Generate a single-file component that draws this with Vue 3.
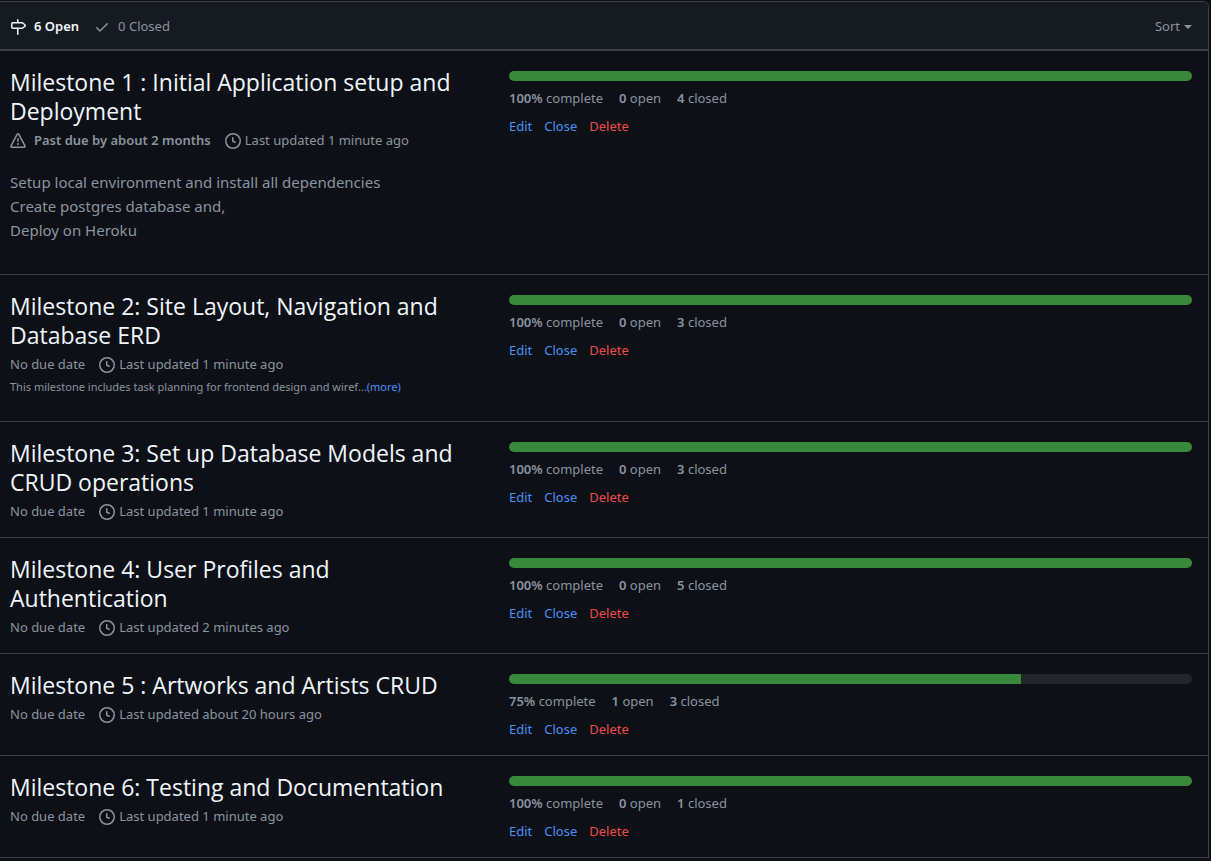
<script setup>
const milestones = [
  {
    title: 'Milestone 1 : Initial Application setup and Deployment',
    pastDue: 'Past due by about 2 months',
    updated: 'Last updated 1 minute ago',
    details: ['Setup local environment and install all dependencies', 'Create postgres database and,', 'Deploy on Heroku'],
    percent: 100, open: 0, closed: 4,
  },
  {
    title: 'Milestone 2: Site Layout, Navigation and Database ERD',
    updated: 'Last updated 1 minute ago',
    excerpt: 'This milestone includes task planning for frontend design and wiref...',
    percent: 100, open: 0, closed: 3,
  },
  { title: 'Milestone 3: Set up Database Models and CRUD operations', updated: 'Last updated 1 minute ago', percent: 100, open: 0, closed: 3 },
  { title: 'Milestone 4: User Profiles and Authentication', updated: 'Last updated 2 minutes ago', percent: 100, open: 0, closed: 5 },
  { title: 'Milestone 5 : Artworks and Artists CRUD', updated: 'Last updated about 20 hours ago', percent: 75, open: 1, closed: 3 },
  { title: 'Milestone 6: Testing and Documentation', updated: 'Last updated 1 minute ago', percent: 100, open: 0, closed: 1 },
]
</script>

<template>
  <main class="box">
    <header class="header">
      <nav class="states">
        <a href="#open" class="state current">
          <svg class="icon" viewBox="0 0 16 16" aria-hidden="true"><path fill-rule="evenodd" d="M7.75 0a.75.75 0 01.75.75V3h3.634c.414 0 .814.147 1.13.414l2.07 1.75a1.75 1.75 0 010 2.672l-2.07 1.75a1.75 1.75 0 01-1.13.414H8.5v5.25a.75.75 0 11-1.5 0V10H2.75A1.75 1.75 0 011 8.25v-3.5C1 3.784 1.784 3 2.75 3H7V.75A.75.75 0 017.75 0zm0 8.5h4.384a.25.25 0 00.161-.06l2.07-1.75a.25.25 0 000-.38l-2.07-1.75a.25.25 0 00-.161-.06H2.75a.25.25 0 00-.25.25v3.5c0 .138.112.25.25.25h5z" /></svg>
          <span>6 Open</span>
        </a>
        <a href="#closed" class="state">
          <svg class="icon" viewBox="0 0 16 16" aria-hidden="true"><path fill-rule="evenodd" d="M13.78 4.22a.75.75 0 010 1.06l-7.25 7.25a.75.75 0 01-1.06 0L2.22 9.28a.75.75 0 011.06-1.06L6 10.94l6.72-6.72a.75.75 0 011.06 0z" /></svg>
          <span>0 Closed</span>
        </a>
      </nav>
      <button type="button" class="sort">Sort<span class="caret"></span></button>
    </header>

    <ul class="list">
      <li v-for="m in milestones" :key="m.title" class="row">
        <div class="info">
          <h2 class="title"><a href="#milestone">{{ m.title }}</a></h2>
          <div class="meta">
            <span v-if="m.pastDue" class="due past">
              <svg class="icon" viewBox="0 0 16 16" aria-hidden="true"><path fill-rule="evenodd" d="M8.22 1.754a.25.25 0 00-.44 0L1.698 13.132a.25.25 0 00.22.368h12.164a.25.25 0 00.22-.368L8.22 1.754zm-1.763-.707c.659-1.234 2.427-1.234 3.086 0l6.082 11.378A1.75 1.75 0 0114.082 15H1.918a1.75 1.75 0 01-1.543-2.575L6.457 1.047zM9 11a1 1 0 11-2 0 1 1 0 012 0zm-.25-5.25a.75.75 0 00-1.5 0v2.5a.75.75 0 001.5 0v-2.5z" /></svg>
              <span>{{ m.pastDue }}</span>
            </span>
            <span v-else class="due">No due date</span>
            <span class="updated">
              <svg class="icon" viewBox="0 0 16 16" aria-hidden="true"><path fill-rule="evenodd" d="M1.5 8a6.5 6.5 0 1113 0 6.5 6.5 0 01-13 0zM8 0a8 8 0 100 16A8 8 0 008 0zm.5 4.75a.75.75 0 00-1.5 0v3.5a.75.75 0 00.471.696l2.5 1a.75.75 0 00.557-1.392L8.5 7.742V4.75z" /></svg>
              <span>{{ m.updated }}</span>
            </span>
          </div>
          <p v-if="m.details" class="details">
            <template v-for="(line, i) in m.details" :key="line"><br v-if="i">{{ line }}</template>
          </p>
          <p v-if="m.excerpt" class="excerpt">{{ m.excerpt }}<a href="#more">(more)</a></p>
        </div>
        <div class="progress">
          <div class="bar"><div class="fill" :style="{ width: m.percent + '%' }"></div></div>
          <div class="stats">
            <span><b>{{ m.percent }}%</b> complete</span>
            <span><b>{{ m.open }}</b> open</span>
            <span><b>{{ m.closed }}</b> closed</span>
          </div>
          <div class="actions">
            <a href="#edit">Edit</a>
            <button type="button">Close</button>
            <button type="button" class="danger">Delete</button>
          </div>
        </div>
      </li>
    </ul>
  </main>
</template>

<style>
body {
  background: #0d1117;
}
</style>

<style scoped>
.box {
  margin: 1px 2px 0 0;
  border: 1px solid #3b4048;
  border-left: 0;
  border-top-right-radius: 6px;
  overflow: hidden;
  color: #8b949e;
  font: 13px/21px "Noto Sans", "Open Sans", sans-serif;
}
a, button {
  font: inherit;
  color: #4a8ff5;
  text-decoration: none;
}
button {
  padding: 0;
  border: 0;
  background: none;
  cursor: pointer;
}
.icon {
  flex: none;
  width: 16px;
  height: 16px;
  fill: currentColor;
}
.header {
  display: flex;
  align-items: center;
  justify-content: space-between;
  padding: 14px 16px 12px 10px;
  background: #161b22;
  border-bottom: 2px solid #3b4048;
}
.states {
  display: flex;
  gap: 15px;
}
.state {
  display: flex;
  align-items: center;
  gap: 8px;
  color: #8b949e;
}
.current {
  color: #f0f6fc;
  font-weight: 600;
}
.sort {
  display: flex;
  align-items: center;
  gap: 4px;
  color: #8b949e;
}
.caret {
  border: 4px solid transparent;
  border-top-color: currentColor;
  border-bottom: 0;
}
.list {
  margin: 0;
  padding: 0;
  list-style: none;
}
.row {
  display: grid;
  grid-template-columns: 469px 1fr;
  column-gap: 30px;
  padding: 0 16px 0 10px;
}
.row + .row {
  border-top: 1px solid #3b4048;
}
.info {
  padding: 17px 0 15px;
}
.title {
  margin: 0;
  font-family: "Open Sans", "Noto Sans", sans-serif;
  font-size: 23px;
  line-height: 29px;
  font-weight: 400;
}
.title a {
  color: #f0f6fc;
}
.meta {
  display: flex;
  gap: 14px;
  margin-top: 4px;
}
.due, .updated {
  display: flex;
  align-items: center;
  gap: 4px;
}
.past {
  gap: 8px;
  font-weight: 600;
}
.details {
  margin: 19px 0 17px;
  font-size: 15px;
  line-height: 24px;
}
.excerpt {
  margin: 3px 0 10px;
  font-size: 11px;
  line-height: 18px;
}
.progress {
  padding: 20px 0 15px;
}
.bar {
  height: 10px;
  border-radius: 5px;
  overflow: hidden;
  background: #21262d;
}
.fill {
  height: 100%;
  background: #3a883b;
}
.stats {
  display: flex;
  gap: 16px;
  margin-top: 7px;
}
.stats b {
  font-weight: 600;
}
.actions {
  display: flex;
  gap: 12px;
  margin-top: 7px;
}
.actions .danger {
  color: #f04a46;
}
</style>
